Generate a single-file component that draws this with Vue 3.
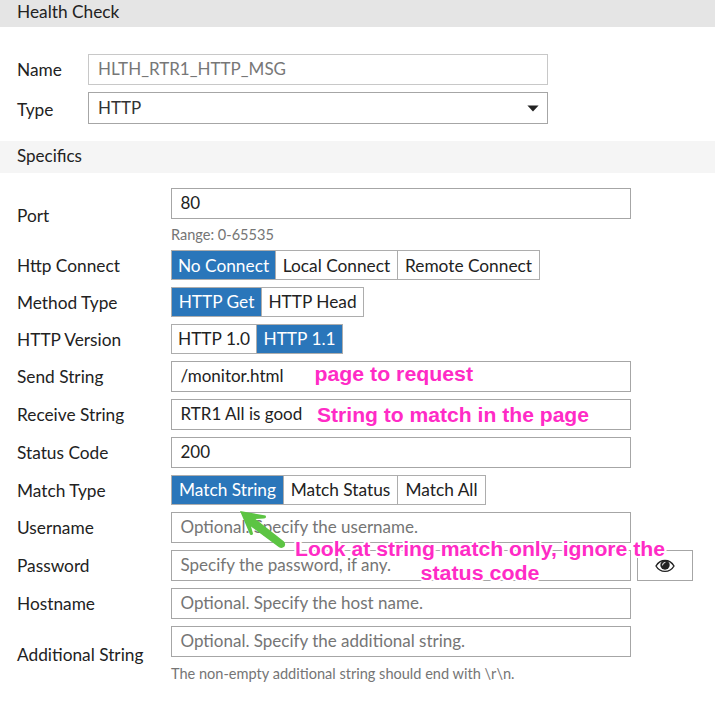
<script setup>
const rows = [
  { label: 'Port', value: '80', help: 'Range: 0-65535' },
  { label: 'Http Connect', options: [['No Connect', 104], ['Local Connect', 122], ['Remote Connect', 142]], active: 0, low: true },
  { label: 'Method Type', options: [['HTTP Get', 90], ['HTTP Head', 102]], active: 0 },
  { label: 'HTTP Version', options: [['HTTP 1.0', 85], ['HTTP 1.1', 86]], active: 1 },
  { label: 'Send String', value: '/monitor.html' },
  { label: 'Receive String', value: 'RTR1 All is good' },
  { label: 'Status Code', value: '200' },
  { label: 'Match Type', options: [['Match String', 112], ['Match Status', 114], ['Match All', 88]], active: 0 },
  { label: 'Username', hint: 'Optional. Specify the username.' },
  { label: 'Password', hint: 'Specify the password, if any.', reveal: true },
  { label: 'Hostname', hint: 'Optional. Specify the host name.' },
  { label: 'Additional String', hint: 'Optional. Specify the additional string.', help: 'The non-empty additional string should end with \\r\\n.', last: true },
]
</script>

<template>
  <main class="page">
    <header class="title">Health Check</header>
    <section class="general">
      <div class="row">
        <label class="label">Name</label>
        <div class="field disabled">HLTH_RTR1_HTTP_MSG</div>
      </div>
      <div class="row">
        <label class="label type">Type</label>
        <div class="field select">
          <span>HTTP</span>
          <svg class="caret" width="12" height="7" viewBox="0 0 12 7"><path d="M.4 .5H11.6L6 6.6Z" /></svg>
        </div>
      </div>
    </section>
    <h2 class="subtitle">Specifics</h2>
    <section class="specifics">
      <div v-for="row in rows" :key="row.label" class="row" :class="{ last: row.last }">
        <label class="label">{{ row.label }}</label>
        <div class="control">
          <div v-if="row.options" class="segments" :class="{ low: row.low }">
            <span
              v-for="(option, i) in row.options"
              :key="option[0]"
              class="segment"
              :class="{ active: i === row.active }"
              :style="{ width: option[1] + 'px' }"
            >{{ option[0] }}</span>
          </div>
          <div v-else class="line">
            <div class="field" :class="{ hint: row.hint }">{{ row.value || row.hint }}</div>
            <button v-if="row.reveal" class="reveal" aria-label="Show password">
              <svg width="20" height="14" viewBox="0 0 20 14">
                <path d="M1 7C5.2-.4 14.8-.4 19 7C14.8 14.2 5.2 14.2 1 7Z" fill="none" stroke="#222" stroke-width="1.4" />
                <circle cx="10" cy="6" r="4.7" fill="#222" />
                <path d="M7.500 6Q7.500 3.500 10 3.400" fill="none" stroke="#fff" stroke-width="1" stroke-linecap="round" />
              </svg>
            </button>
          </div>
          <p v-if="row.help" class="help">{{ row.help }}</p>
        </div>
      </div>
    </section>
    <svg class="notes" width="715" height="714" viewBox="0 0 715 714">
      <path class="arrow" d="M240 511L265.500 515.500Q267 518 264 518.600L255.500 519L284 541.500Q286 544 284.500 546.500Q282 549 279 547.300L251 526.500L253 533.500Q252.500 536 250 534.500Z" />
      <text x="314.500" y="380.500" textLength="158.500" lengthAdjust="spacingAndGlyphs">page to request</text>
      <text x="317" y="421.500" textLength="272" lengthAdjust="spacingAndGlyphs">String to match in the page</text>
      <text x="295" y="555.500" textLength="370" lengthAdjust="spacingAndGlyphs">Look at string match only, ignore the</text>
      <text x="420.500" y="579.500" textLength="119" lengthAdjust="spacingAndGlyphs">status code</text>
    </svg>
  </main>
</template>

<style>
body { margin: 0; background: #fff; }
</style>

<style scoped>
* { box-sizing: border-box; }
.page {
  position: relative;
  width: 715px;
  height: 714px;
  overflow: hidden;
  background: #fff;
  color: #222;
  font-family: Lato, "Liberation Sans", sans-serif;
  font-size: 17.300px;
  line-height: 21px;
}
.title { height: 27px; padding: 1px 17px 0; background: #e5e5e5; }
.general { display: flex; flex-direction: column; gap: 7px; padding: 27px 17px 17px; }
.general .label { width: 71px; }
.general .type { padding-top: 3px; }
.row { display: flex; align-items: center; }
.label { flex: none; width: 154px; white-space: nowrap; }
.field {
  width: 460px;
  height: 31px;
  padding: 3px 8.500px 0;
  border: 1px solid #a6a6a6;
  background: #fff;
  font-size: 17px;
  white-space: nowrap;
}
.disabled { padding-left: 9px; border-color: #c8c8c8; color: #777; }
.select { display: flex; justify-content: space-between; height: 32px; padding: 4px 8px 0 9px; color: #333; }
.caret { margin-top: 8px; fill: #222; }
.subtitle { margin: 0; height: 32px; padding: 4px 17px 0; background: #f5f5f5; font-size: 17px; font-weight: 400; }
.specifics { display: flex; flex-direction: column; gap: 7px; padding: 15px 17px 0; }
.line { display: flex; gap: 6px; }
.hint { color: #757575; }
.help { margin: 0; height: 24px; padding-top: 6px; color: #757575; font-size: 14.550px; line-height: 20px; white-space: nowrap; }
.last .label { padding-top: 2px; }
.last .help { padding-top: 7px; }
.segments { display: flex; width: max-content; height: 30px; border: 1px solid #adadad; border-left: 0; }
.segment { padding-top: 3px; border-left: 1px solid #adadad; text-align: center; white-space: nowrap; }
.low .segment { padding-top: 4px; }
.active { background: #2a76ba; color: #fff; }
.reveal { display: flex; align-items: center; justify-content: center; width: 56px; height: 31px; padding: 0; border: 1px solid #a6a6a6; background: #fff; }
.notes { position: absolute; left: 0; top: 0; pointer-events: none; }
.notes text {
  font: bold 20px "Liberation Sans", Arial, sans-serif;
  fill: #ff2bc6;
  stroke: #fff;
  stroke-width: 4px;
  stroke-linejoin: round;
  paint-order: stroke;
}
.arrow { fill: #5cc443; }
</style>
